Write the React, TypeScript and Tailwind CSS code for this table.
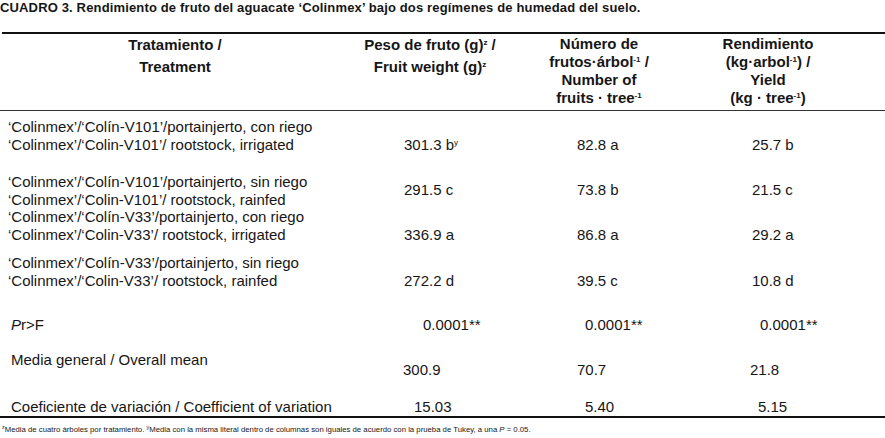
import React from "react";

const Sup = ({ children }: { children: React.ReactNode }) => (
  <span className="relative top-[-5px] text-[8px] leading-none">{children}</span>
);

const FSup = ({ children }: { children: React.ReactNode }) => (
  <span className="relative top-[-3px] text-[5.5px] leading-none">{children}</span>
);

type Row = {
  l1: string;
  l2: string;
  h: string;
  pt: string;
  lpt: string;
  v: [React.ReactNode, string, string];
};

const rows: Row[] = [
  {
    l1: "‘Colinmex’/‘Colín-V101’/portainjerto, con riego",
    l2: "‘Colinmex’/‘Colin-V101’/ rootstock, irrigated",
    h: "h-[62px]",
    lpt: "pt-[7px]",
    pt: "pt-[25px]",
    v: [
      <>
        301.3 b<Sup>y</Sup>
      </>,
      "82.8 a",
      "25.7 b",
    ],
  },
  {
    l1: "‘Colinmex’/‘Colín-V101’/portainjerto, sin riego",
    l2: "‘Colinmex’/‘Colin-V101’/ rootstock, rainfed",
    h: "h-[35px]",
    lpt: "pt-0",
    pt: "pt-[8px]",
    v: ["291.5 c", "73.8 b", "21.5 c"],
  },
  {
    l1: "‘Colinmex’/‘Colín-V33’/portainjerto, con riego",
    l2: "‘Colinmex’/‘Colin-V33’/ rootstock, irrigated",
    h: "h-[46px]",
    lpt: "pt-0",
    pt: "pt-[18px]",
    v: ["336.9 a", "86.8 a", "29.2 a"],
  },
  {
    l1: "‘Colinmex’/‘Colín-V33’/portainjerto, sin riego",
    l2: "‘Colinmex’/‘Colin-V33’/ rootstock, rainfed",
    h: "h-[62px]",
    lpt: "pt-0",
    pt: "pt-[18px]",
    v: ["272.2 d", "39.5 c", "10.8 d"],
  },
];

export default function App() {
  return (
    <div className="w-[885px] h-[438px] overflow-hidden bg-white text-[#161616] font-['Liberation_Sans',Arial,sans-serif]">
      <div className="h-[16px] leading-[16px] text-[13px] tracking-[0.15px] font-bold whitespace-nowrap">
        CUADRO 3. Rendimiento de fruto del aguacate ‘Colinmex’ bajo dos regímenes de humedad del suelo.
      </div>
      <div className="mt-[16px] ml-[2px] border-t-2 border-[#111]" />
      {/* header */}
      <div className="flex h-[77px] border-b border-[#333] text-[15px] font-bold">
        <div className="w-[350px] text-center leading-[22px]">
          <div>Tratamiento /</div>
          <div>Treatment</div>
        </div>
        <div className="w-[160px] text-center leading-[22px]">
          <div>
            Peso de fruto (g)<Sup>z</Sup> /
          </div>
          <div>
            Fruit weight (g)<Sup>z</Sup>
          </div>
        </div>
        <div className="w-[178px] text-center leading-[18px] pt-[1px]">
          <div>Número de</div>
          <div>
            frutos·árbol<Sup>-1</Sup> /
          </div>
          <div>Number of</div>
          <div>
            fruits · tree<Sup>-1</Sup>
          </div>
        </div>
        <div className="w-[160px] text-center leading-[18px] pt-[1px]">
          <div>Rendimiento</div>
          <div>
            (kg·arbol<Sup>-1</Sup>) /
          </div>
          <div>Yield</div>
          <div>
            (kg · tree<Sup>-1</Sup>)
          </div>
        </div>
      </div>
      {/* body */}
      <div className="text-[15px] leading-[18px] whitespace-nowrap">
        {rows.map((r, i) => (
          <div key={i} className={`flex ${r.h}`}>
            <div className={`w-[350px] pl-[8px] ${r.lpt}`}>
              <div>{r.l1}</div>
              <div>{r.l2}</div>
            </div>
            <div className={`w-[160px] pl-[54px] ${r.pt}`}>{r.v[0]}</div>
            <div className={`w-[178px] pl-[67px] ${r.pt}`}>{r.v[1]}</div>
            <div className={`w-[160px] pl-[64px] ${r.pt}`}>{r.v[2]}</div>
          </div>
        ))}
        <div className="flex h-[35px]">
          <div className="w-[350px] pl-[11px]">
            <i>P</i>r&gt;F
          </div>
          <div className="w-[160px] pl-[73px]">0.0001**</div>
          <div className="w-[178px] pl-[75px]">0.0001**</div>
          <div className="w-[160px] pl-[72px]">0.0001**</div>
        </div>
        <div className="flex h-[47px]">
          <div className="w-[350px] pl-[11px]">Media general / Overall mean</div>
          <div className="w-[160px] pl-[53px] pt-[10px]">300.9</div>
          <div className="w-[178px] pl-[67px] pt-[10px]">70.7</div>
          <div className="w-[160px] pl-[62px] pt-[10px]">21.8</div>
        </div>
        <div className="flex h-[18px]">
          <div className="w-[350px] pl-[11px]">Coeficiente de variación / Coefficient of variation</div>
          <div className="w-[160px] pl-[64px]">15.03</div>
          <div className="w-[178px] pl-[75px]">5.40</div>
          <div className="w-[160px] pl-[70px]">5.15</div>
        </div>
      </div>
      <div className="border-t-2 border-[#111]" />
      <div className="mt-[6px] pl-[2px] text-[7.75px] leading-[12px] whitespace-nowrap">
        <FSup>z</FSup>Media de cuatro árboles por tratamiento. <FSup>y</FSup>Media con la misma literal dentro de columnas
        son iguales de acuerdo con la prueba de Tukey, a una <i>P</i> = 0.05.
      </div>
    </div>
  );
}
